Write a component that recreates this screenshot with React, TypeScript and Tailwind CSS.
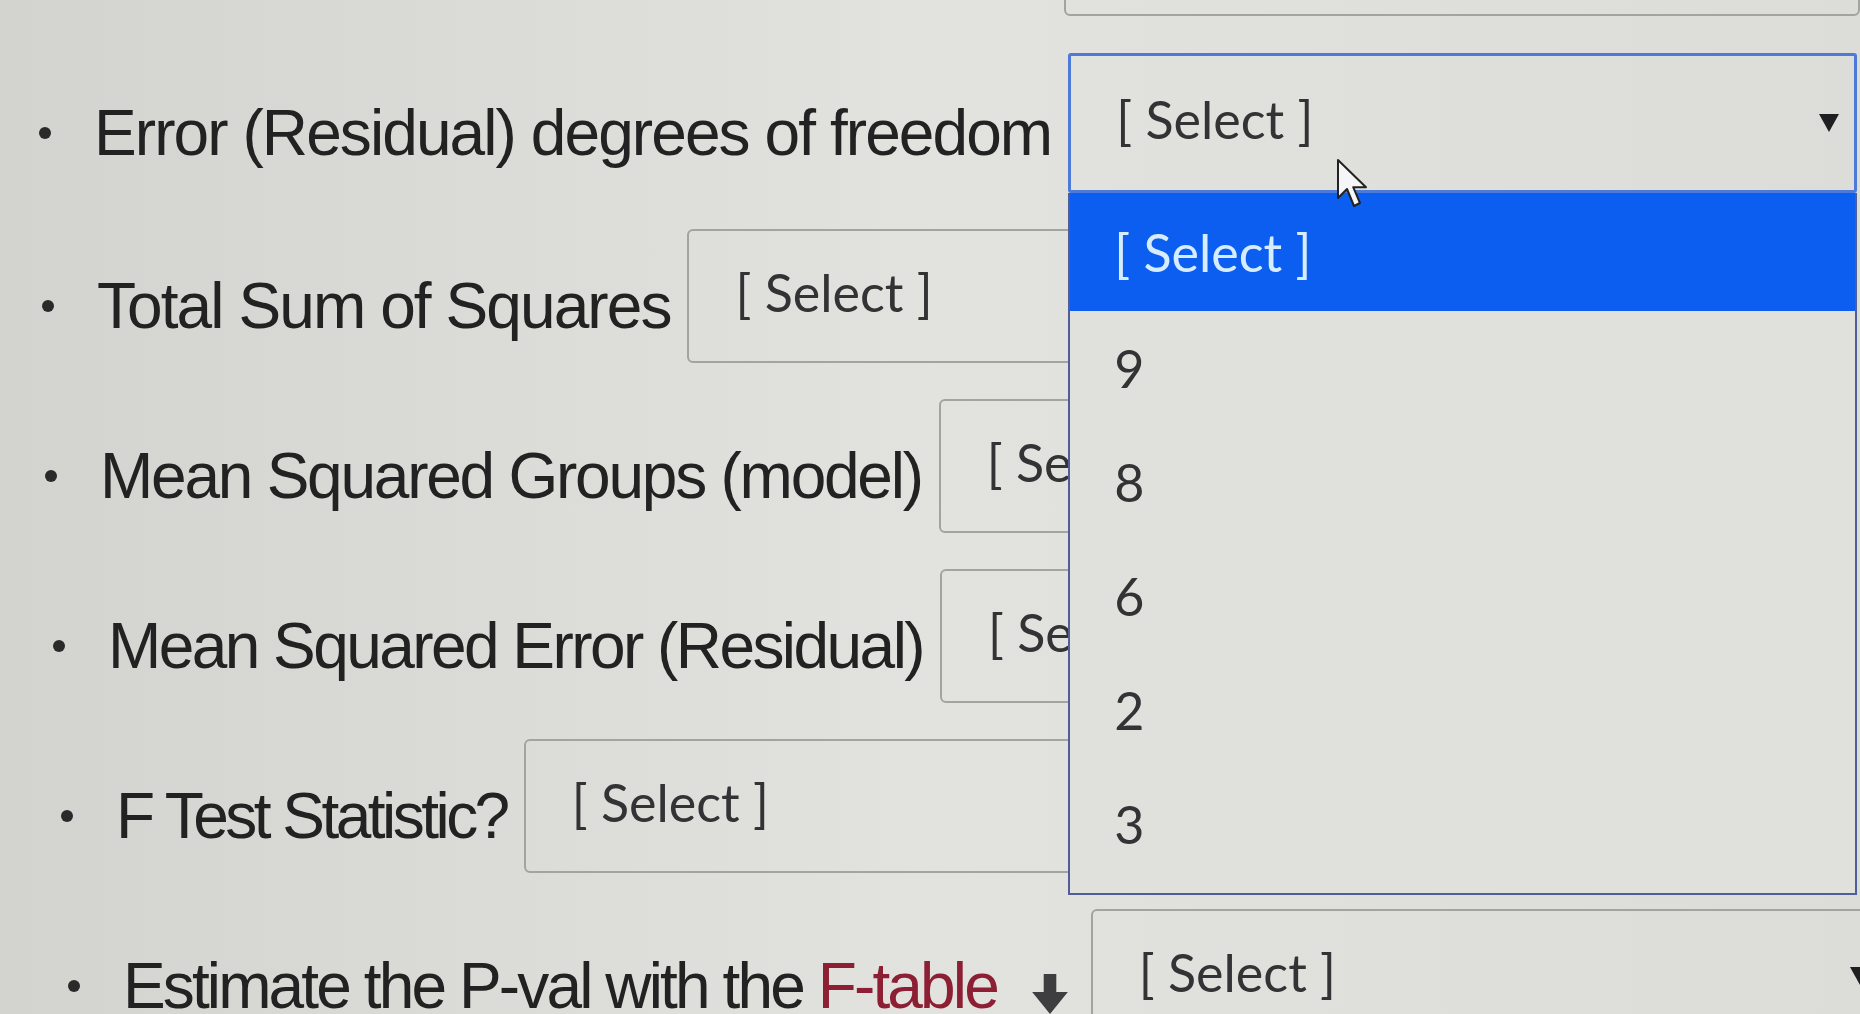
import React from "react"

const labelFont = { fontFamily: '"Liberation Sans", Arial, sans-serif' }
const selectFont = { fontFamily: 'Lato, "Open Sans", sans-serif' }

function Caret() {
  return (
    <svg width="22" height="20" viewBox="0 0 22 20" className="shrink-0">
      <path d="M1 1 H21 L11 19 Z" fill="#1f1f22" />
    </svg>
  )
}

function Bullet() {
  return <span className="mr-[43px] inline-block h-[12px] w-[12px] shrink-0 rounded-full bg-[#2a2a2a]" />
}

function SelectBox({ focused = false, children }: { focused?: boolean; children?: React.ReactNode }) {
  return (
    <div
      className={
        focused
          ? "relative flex h-[140px] flex-1 items-center rounded-[3px] border-[3px] border-[#4d7ad9] pl-[45px] pr-[14px]"
          : "relative flex h-[134px] flex-1 items-center rounded-[6px] border-2 border-[#a3a39f] pl-[46px] pr-[14px]"
      }
    >
      <span className="flex-1 text-[52px] leading-none text-[#333335] -translate-y-[4px]" style={selectFont}>
        [ Select ]
      </span>
      {children}
    </div>
  )
}

const options = ["[ Select ]", "9", "8", "6", "2", "3"]

function Row({ pad, track, label, children }: { pad: string; track: string; label: React.ReactNode; children: React.ReactNode }) {
  return (
    <div className={`flex items-center ${pad}`}>
      <div className="flex items-center pt-[20px] pr-[17px]">
        <Bullet />
        <span className={`whitespace-nowrap text-[64px] leading-none text-[#222222] ${track}`} style={labelFont}>
          {label}
        </span>
      </div>
      {children}
    </div>
  )
}

export default function App() {
  return (
    <div className="relative h-[1014px] w-[1860px] overflow-hidden bg-gradient-to-r from-[#d3d3cf] via-[#e2e2de] to-[#dcdcd8]">
      {/* previous question's select, cut off at the top */}
      <div className="ml-[1064px] -mt-[26px] h-[42px] rounded-[6px] border-2 border-[#a3a39f]" />

      <div className="mt-[37px] flex flex-col gap-[36px] pr-[3px]">
        <Row pad="pl-[39px]" track="tracking-[-0.03em]" label="Error (Residual) degrees of freedom">
          <div className="relative flex-1">
            <div className="flex">
              <SelectBox focused>
                <Caret />
              </SelectBox>
            </div>
            {/* open option list */}
            <div className="absolute left-0 right-0 top-full z-10 border-2 border-t-0 border-[#515d9a] bg-[#e0e0dc] pb-[12px]">
              {options.map((o, i) => (
                <div
                  key={o}
                  className={
                    i === 0
                      ? "flex h-[118px] items-center bg-[#0c5ef0] pl-[44px] text-[52px] leading-none text-[#d6ecff]"
                      : "flex h-[114px] items-center pl-[44px] text-[52px] leading-none text-[#333335]"
                  }
                  style={selectFont}
                >
                  {o}
                </div>
              ))}
            </div>
            {/* mouse pointer */}
            <svg width="40" height="52" viewBox="0 0 20 26" className="absolute left-[268px] top-[105px] z-20">
              <path d="M1 1 V20 L5.5 15.5 L9 24 L12 22.5 L8.6 14.6 L15 14.6 Z" fill="#f4f6f8" stroke="#222" strokeWidth="1" strokeLinejoin="round" />
            </svg>
          </div>
        </Row>

        <Row pad="pl-[42px]" track="tracking-[-0.03em]" label="Total Sum of Squares">
          <SelectBox />
        </Row>

        <Row pad="pl-[45px]" track="tracking-[-0.035em]" label="Mean Squared Groups (model)">
          <SelectBox />
        </Row>

        <Row pad="pl-[53px]" track="tracking-[-0.04em]" label="Mean Squared Error (Residual)">
          <SelectBox />
        </Row>

        <Row pad="pl-[61px]" track="tracking-[-0.055em]" label="F Test Statistic?">
          <SelectBox />
        </Row>

        <div className="-mr-[30px] flex items-center pl-[68px]">
          <div className="flex items-center pt-[20px]">
            <Bullet />
            <span className="whitespace-nowrap text-[64px] leading-none tracking-[-0.045em] text-[#222222]" style={labelFont}>
              Estimate the P-val with the <span className="text-[#8c1f33]">F-table</span>
            </span>
            <svg width="38" height="42" viewBox="0 0 36 40" className="ml-[34px] mr-[22px] mt-[16px]">
              <path d="M12 1 H24 V18 H35 L18 39 L1 18 H12 Z" fill="#3e3e40" />
            </svg>
          </div>
          <SelectBox>
            <Caret />
          </SelectBox>
        </div>
      </div>
    </div>
  )
}
